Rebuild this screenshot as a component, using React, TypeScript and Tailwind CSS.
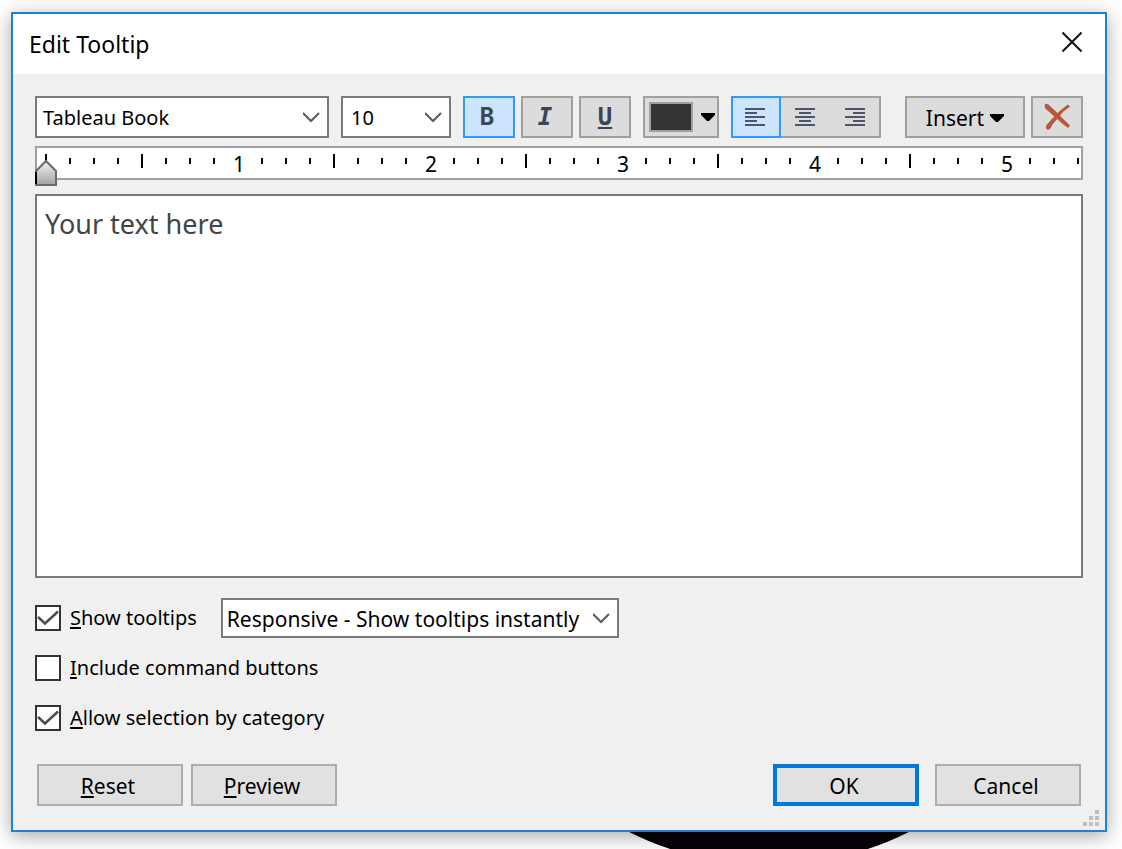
import React, { useState } from "react";

interface ComboProps {
  id: string;
  label: string;
  options: string[];
  className: string;
  selectClassName: string;
}

interface CheckProps {
  id: string;
  accessKey: string;
  text: string;
  defaultChecked?: boolean;
}

const TICKS = Array.from({ length: 44 }, (_, i) => i);

const ALIGNMENTS = [
  { name: "Align left", x: [0, 0, 0, 0, 0] },
  { name: "Align center", x: [0, 4, 0, 4, 0] },
  { name: "Align right", x: [0, 8, 0, 8, 0] },
];

function Combo({ id, label, options, className, selectClassName }: ComboProps) {
  return (
    <div className={`relative shrink-0 ${className}`}>
      <select
        id={id}
        aria-label={label}
        className={`h-full w-full appearance-none border-2 border-[#7a7a7a] bg-white pr-7 pt-0.5 text-black outline-none ${selectClassName}`}
      >
        {options.map(option => (
          <option key={option}>{option}</option>
        ))}
      </select>
      <svg
        className="pointer-events-none absolute right-2 top-1/2 -translate-y-1/2"
        width="18"
        height="12"
        viewBox="0 0 18 12"
        fill="none"
        stroke="#5a5a5a"
        strokeWidth="2"
      >
        <path d="M0 2l8 8 8-8" />
      </svg>
    </div>
  );
}

function Check({ id, accessKey, text, defaultChecked }: CheckProps) {
  return (
    <div className="flex items-center gap-[9px]">
      <span className="relative flex h-[26px] w-[26px]">
        <input
          id={id}
          type="checkbox"
          defaultChecked={defaultChecked}
          className="peer h-[26px] w-[26px] appearance-none border-2 border-[#333333] bg-white"
        />
        <svg
          className="pointer-events-none absolute inset-0 hidden peer-checked:block"
          width="26"
          height="26"
          viewBox="0 0 26 26"
          fill="none"
          stroke="#4d4d4d"
          strokeWidth="2.500"
        >
          <path d="M3 12l7 6.500L23 6.500" />
        </svg>
      </span>
      <label htmlFor={id}>
        <Mnemonic letter={accessKey} rest={text} />
      </label>
    </div>
  );
}

function Mnemonic({ letter, rest }: { letter: string; rest: string }) {
  return (
    <>
      <span className="underline decoration-2 underline-offset-2">{letter}</span>
      {rest}
    </>
  );
}

function DropArrow() {
  return (
    <svg width="14" height="8" viewBox="0 0 14 8">
      <path d="M0 0h14v2L8 8H6L0 2z" fill="#000" />
    </svg>
  );
}

function Ruler() {
  return (
    <div className="relative mt-2 h-[34px] border-2 border-[#a0a0a0] bg-white">
      <svg className="block h-full w-full overflow-hidden">
        {TICKS.map(i => {
          const x = 8 + i * 24;
          if (i > 0 && i % 8 === 0) {
            return (
              <text key={i} x={x + 2} y="24" textAnchor="middle" fontSize="21">
                {i / 8}
              </text>
            );
          }
          return i % 4 === 0 ? (
            <rect key={i} x={x} y="6" width="2" height="14" />
          ) : (
            <rect key={i} x={x} y="10" width="2" height="6" />
          );
        })}
      </svg>
      {/* indent marker hangs over the lower edge */}
      <svg className="absolute -left-0.5 top-3" width="22" height="26" viewBox="0 0 22 26">
        <defs>
          <linearGradient id="marker" x1="0" y1="0" x2="0" y2="1">
            <stop offset="0" stopColor="#f4f4f4" />
            <stop offset="1" stopColor="#a2a2a2" />
          </linearGradient>
        </defs>
        <path d="M11 1L21 11V25H1V11z" fill="url(#marker)" stroke="#6a6a6a" strokeWidth="2" />
        <path d="M1 12v12" stroke="#000" strokeWidth="2" />
      </svg>
    </div>
  );
}

function Toolbar() {
  const [align, setAlign] = useState(0);
  const plain = "h-full w-[52px] border-2 border-[#a0a0a0] bg-[#dcdcdc]";
  const glyph = "font-['DejaVu_Sans_Mono',monospace] text-2xl font-bold leading-6 text-[#3a4557]";

  return (
    <div className="flex h-[42px] justify-between">
      <div className="flex gap-3">
        <Combo
          id="font"
          label="Font"
          options={["Tableau Book", "Tableau Light", "Tableau Medium"]}
          className="w-[294px]"
          selectClassName="pl-1.5"
        />
        <Combo id="size" label="Size" options={["10", "11", "12"]} className="w-[110px]" selectClassName="pl-2" />
        <div className="flex gap-1.5">
          <button aria-label="Bold" className={`h-full w-[52px] border-2 border-[#3399ff] bg-[#cce4ff] pr-1 ${glyph}`}>
            B
          </button>
          <button aria-label="Italic" className={`${plain} ${glyph} pr-1 italic`}>
            I
          </button>
          <button aria-label="Underline" className={`${plain} ${glyph}`}>
            <span className="underline decoration-2 underline-offset-2">U</span>
          </button>
        </div>
        <button
          aria-label="Text color"
          className="flex h-full w-[76px] items-center justify-between border-2 border-[#a0a0a0] bg-[#dcdcdc] pl-1 pr-0.5"
        >
          <span className="h-[30px] w-11 border-2 border-[#a0a0a0] bg-[#333333]" />
          <DropArrow />
        </button>
        <div className="flex">
          {ALIGNMENTS.map((item, i) => (
            <button
              key={item.name}
              aria-label={item.name}
              aria-pressed={align === i}
              onClick={() => setAlign(i)}
              className={
                align === i
                  ? "flex w-[50px] items-center justify-center border-2 border-[#3399ff] bg-[#cce4ff] pr-0.5"
                  : "flex w-[50px] items-center justify-center border-y-2 border-[#a0a0a0] bg-[#dcdcdc] pr-0.5 last:border-r-2 last:pr-0"
              }
            >
              <svg width="20" height="18" viewBox="0 0 20 18" fill="#4a566b" shapeRendering="crispEdges">
                {item.x.map((x, row) => (
                  <rect key={row} x={x} y={row * 4} width={row % 2 === 0 ? 20 : 12} height="2" />
                ))}
              </svg>
            </button>
          ))}
        </div>
      </div>
      <div className="flex gap-1.5">
        <button className="flex h-full w-[120px] items-center justify-center gap-1.5 border-2 border-[#a0a0a0] bg-[#dcdcdc] pt-0.5 text-[21px]">
          Insert
          <DropArrow />
        </button>
        <button aria-label="Clear" className={`flex items-center justify-center ${plain}`}>
          <svg width="28" height="28" viewBox="0 0 28 28" fill="#b9573a">
            <path d="M2 1Q5 0 8 4L15 10.500Q20 16 27 22.500L25 25Q18 20 12.500 14.500L4 7Q1 5 2 1z" />
            <path d="M27 3.500L25 1.500Q17 7 12 12.500Q7 18 3.500 22Q2 26 5 27Q8 26 9 22L15.500 14.500Q20 8 27 3.500z" />
          </svg>
        </button>
      </div>
    </div>
  );
}

export default function App() {
  const push = "h-[42px] w-[146px] bg-[#e1e1e1] pr-1 pt-0.5 text-[21px]";

  return (
    <div className="flex min-h-screen flex-col overflow-hidden bg-white pt-3 font-['Noto_Sans',sans-serif] text-xl leading-7 text-black">
      <main
        role="dialog"
        aria-labelledby="title"
        className="relative z-10 ml-[11px] mr-[15px] flex flex-1 flex-col border-2 border-[#1883d7] bg-[#f0f0f0] shadow-[0_4px_18px_rgba(0,0,0,0.35)]"
      >
        <header className="flex h-[60px] items-center justify-between bg-white pl-4 pr-[21px]">
          <h1 id="title" className="text-[23px]">Edit Tooltip</h1>
          <button aria-label="Close" className="flex h-6 w-6 items-start justify-center">
            <svg width="20" height="20" viewBox="0 0 20 20" stroke="#111" strokeWidth="2">
              <path d="M.5.5l19 19M19.500.5L.5 19.500" />
            </svg>
          </button>
        </header>

        <div className="flex flex-1 flex-col px-[22px] pb-6 pt-[22px]">
          <Toolbar />
          <Ruler />
          <textarea
            aria-label="Tooltip text"
            defaultValue="Your text here"
            className="mt-3.5 min-h-40 w-full flex-1 resize-none border-2 border-[#7a7a7a] bg-white px-2 py-2.5 text-[27px] leading-9 text-[#444444] outline-none"
          />

          <div className="mt-5 flex flex-col gap-2.5">
            <div className="flex h-10 items-center gap-6">
              <Check id="show" accessKey="S" text="how tooltips" defaultChecked />
              <Combo
                id="mode"
                label="Tooltip behavior"
                options={["Responsive - Show tooltips instantly", "On Hover - Show tooltips on hover"]}
                className="h-10 w-[398px]"
                selectClassName="pl-1 text-[21px]"
              />
            </div>
            <div className="flex h-10 items-center">
              <Check id="commands" accessKey="I" text="nclude command buttons" />
            </div>
            <div className="flex h-10 items-center">
              <Check id="category" accessKey="A" text="llow selection by category" defaultChecked />
            </div>
          </div>

          <footer className="mt-[26px] flex justify-between px-0.5">
            <div className="flex gap-2">
              <button className={`${push} border-2 border-[#adadad]`}>
                <Mnemonic letter="R" rest="eset" />
              </button>
              <button className={`${push} border-2 border-[#adadad]`}>
                <Mnemonic letter="P" rest="review" />
              </button>
            </div>
            <div className="flex gap-4">
              <button className={`${push} border-4 border-[#0078d7]`}>OK</button>
              <button className={`${push} border-2 border-[#adadad]`}>Cancel</button>
            </div>
          </footer>
        </div>

        <svg
          className="absolute bottom-1 right-1.5 cursor-nwse-resize"
          width="16"
          height="16"
          viewBox="0 0 16 16"
          fill="#bfbfbf"
          shapeRendering="crispEdges"
        >
          <path d="M12 0h4v4h-4zM6 6h4v4H6zM12 6h4v4h-4zM0 12h4v4H0zM6 12h4v4H6zM12 12h4v4h-4z" />
        </svg>
      </main>

      {/* bottom of the round mark that the dialog covers */}
      <svg className="block h-[17px] w-full">
        <circle cx="769" cy="-280" r="313" fill="#070207" />
      </svg>
    </div>
  );
}
